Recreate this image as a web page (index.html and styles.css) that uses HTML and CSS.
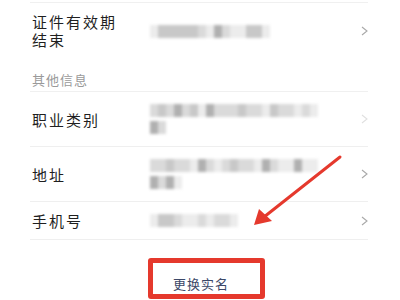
FILE: index.html
```html
<!DOCTYPE html>
<html lang="zh-CN">
<head>
    <meta charset="UTF-8">
    <title>实名信息</title>
    <link rel="stylesheet" href="styles.css">
</head>
<body>
    <div class="page">
        <div class="list">
            <div class="row row-tall">
                <div class="label">
                    <div>证件有效期</div>
                    <div>结束</div>
                </div>
                <div class="value">
                    <div class="blur">
                        <span class="s1"></span><span class="s3"></span><span class="s3"></span><span class="s3"></span><span class="s3"></span><span class="s3"></span><span class="s2"></span><span class="s1"></span><span class="s4"></span><span class="s2"></span><span class="s1"></span><span class="s1"></span><span class="s3"></span><span class="s3"></span><span class="s1"></span>
                    </div>
                </div>
                <svg class="chevron" viewBox="0 0 7 10"><polyline points="1,1 6,5 1,9"/></svg>
            </div>

            <div class="group-title">其他信息</div>

            <div class="row">
                <div class="label">职业类别</div>
                <div class="value">
                    <div class="blur">
                        <span class="s2"></span><span class="s3"></span><span class="s2"></span><span class="s4"></span><span class="s2"></span><span class="s3"></span><span class="s1"></span><span class="s4"></span><span class="s2"></span><span class="s2"></span><span class="s2"></span><span class="s3"></span><span class="s2"></span><span class="s2"></span><span class="s1"></span><span class="s3"></span><span class="s2"></span><span class="s2"></span><span class="s1"></span><span class="s2"></span><span class="s1"></span>
                    </div>
                    <div class="blur">
                        <span class="s4"></span><span class="s2"></span>
                    </div>
                </div>
                <svg class="chevron faint" viewBox="0 0 7 10"><polyline points="1,1 6,5 1,9"/></svg>
            </div>

            <div class="row">
                <div class="label">地址</div>
                <div class="value">
                    <div class="blur">
                        <span class="s2"></span><span class="s2"></span><span class="s3"></span><span class="s2"></span><span class="s2"></span><span class="s1"></span><span class="s4"></span><span class="s2"></span><span class="s1"></span><span class="s2"></span><span class="s3"></span><span class="s2"></span><span class="s2"></span><span class="s1"></span><span class="s4"></span><span class="s2"></span><span class="s1"></span><span class="s1"></span><span class="s4"></span><span class="s1"></span><span class="s1"></span>
                    </div>
                    <div class="blur">
                        <span class="s4"></span><span class="s2"></span><span class="s4"></span><span class="s1"></span>
                    </div>
                </div>
                <svg class="chevron" viewBox="0 0 7 10"><polyline points="1,1 6,5 1,9"/></svg>
            </div>

            <div class="row row-short">
                <div class="label">手机号</div>
                <div class="value">
                    <div class="blur">
                        <span class="s1"></span><span class="s3"></span><span class="s3"></span><span class="s2"></span><span class="s1"></span><span class="s1"></span><span class="s2"></span><span class="s1"></span><span class="s2"></span><span class="s2"></span><span class="s1"></span>
                    </div>
                </div>
                <svg class="chevron" viewBox="0 0 7 10"><polyline points="1,1 6,5 1,9"/></svg>
            </div>
        </div>

        <button class="change-btn">更换实名</button>

        <!-- annotation arrow -->
        <svg class="arrow" viewBox="0 0 400 300">
            <line x1="340" y1="157" x2="264" y2="217"/>
            <polygon points="254,225 259,209 272,221"/>
        </svg>
    </div>
</body>
</html>
```

FILE: styles.css
```css
* {
    margin: 0;
    padding: 0;
    box-sizing: border-box;
}

body {
    font-family: "Noto Sans CJK SC", "Noto Sans", sans-serif;
    background: #fff;
    color: #222;
}

.page {
    position: relative;
    width: 400px;
    height: 300px;
    overflow: hidden;
    padding-top: 2px;
}

.list {
    margin: 0 32px 0 30px;
    border-top: 1px solid #f0f0f0;
}

.row {
    display: grid;
    grid-template-columns: 118px 1fr 12px;
    align-items: center;
    padding: 12px 0 12px 2px;
    border-bottom: 1px solid #efefef;
}

.row-tall {
    padding: 10px 0 11px 2px;
    border-bottom: none;
}

.row-tall .label {
    line-height: 18px;
}

.row-short {
    padding: 10px 0 10px 2px;
}

.label {
    font-size: 15px;
    line-height: 17px;
    letter-spacing: 2px;
    color: #1f1f1f;
}

.value {
    display: flex;
    flex-direction: column;
    gap: 4px;
}

.blur {
    display: flex;
    height: 13px;
    filter: blur(1.5px);
}

.blur span {
    width: 8px;
    height: 13px;
}

.s1 { background: #ececec; }
.s2 { background: #dadada; }
.s3 { background: #c8c8c8; }
.s4 { background: #b0b0b0; }

.chevron {
    width: 7px;
    height: 10px;
    justify-self: end;
    fill: none;
    stroke: #a8a8a8;
    stroke-width: 1.1;
}

.chevron.faint {
    stroke: #e0e0e0;
}

.group-title {
    padding: 12px 2px 3px;
    font-size: 13px;
    line-height: 16px;
    letter-spacing: 1px;
    color: #9a9a9a;
    border-bottom: 1px solid #f0f0f0;
}

.change-btn {
    display: block;
    margin: 18px 0 0 148px;
    width: 117px;
    height: 41px;
    padding: 10px 0 0 20px;
    text-align: left;
    background: #fff;
    border: 5px solid #e5392d;
    border-radius: 3px;
    font-family: inherit;
    font-size: 13px;
    line-height: 16px;
    letter-spacing: 1px;
    color: #3c4868;
}

.arrow {
    position: absolute;
    left: 0;
    top: 0;
    width: 400px;
    height: 300px;
    pointer-events: none;
}

.arrow line {
    stroke: #e5392d;
    stroke-width: 3;
    stroke-linecap: round;
}

.arrow polygon {
    fill: #e5392d;
}
```
